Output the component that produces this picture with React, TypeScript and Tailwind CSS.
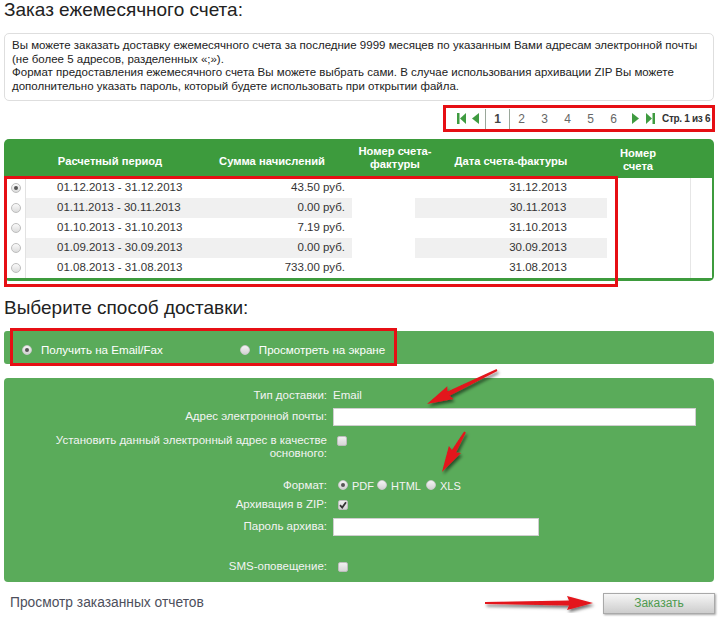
import React from "react";

const rows = [
  { period: "01.12.2013 - 31.12.2013", sum: "43.50 руб.", date: "31.12.2013" },
  { period: "01.11.2013 - 30.11.2013", sum: "0.00 руб.", date: "30.11.2013" },
  { period: "01.10.2013 - 31.10.2013", sum: "7.19 руб.", date: "31.10.2013" },
  { period: "01.09.2013 - 30.09.2013", sum: "0.00 руб.", date: "30.09.2013" },
  { period: "01.08.2013 - 31.08.2013", sum: "733.00 руб.", date: "31.08.2013" },
];

function Radio({ checked, light }: { checked?: boolean; light?: boolean }) {
  return (
    <span
      className={`flex h-[10px] w-[10px] shrink-0 items-center justify-center rounded-full border ${
        light
          ? "border-[#c9c9c9] bg-gradient-to-b from-[#f4f4f4] to-[#d2d2d2]"
          : "border-[#bdbdbd] bg-gradient-to-b from-[#fafafa] to-[#dcdcdc]"
      }`}
    >
      {checked && <span className="h-[4px] w-[4px] rounded-full bg-[#555]" />}
    </span>
  );
}

function Checkbox({ checked }: { checked?: boolean }) {
  return (
    <span className="flex h-[10px] w-[10px] shrink-0 items-center justify-center rounded-[2px] border border-[#bdbdbd] bg-gradient-to-b from-[#f0f0f0] to-[#d6d6d6]">
      {checked && (
        <svg width="8" height="8" viewBox="0 0 8 8">
          <path d="M1 4.2 L3.2 6.5 L7 1.2" fill="none" stroke="#333" strokeWidth="1.8" />
        </svg>
      )}
    </span>
  );
}

function Arrow({ x1, y1, x2, y2 }: { x1: number; y1: number; x2: number; y2: number }) {
  const dx = x2 - x1;
  const dy = y2 - y1;
  const len = Math.hypot(dx, dy);
  const ux = dx / len;
  const uy = dy / len;
  const nx = -uy;
  const ny = ux;
  const head = 24;
  const hw = 7;
  const bx = x2 - ux * head;
  const by = y2 - uy * head;
  const p = (x: number, y: number) => `${x.toFixed(1)},${y.toFixed(1)}`;
  const pts = [
    p(x1 + nx * 1, y1 + ny * 1),
    p(bx + nx * 2.4, by + ny * 2.4),
    p(bx - ux * 2 + nx * hw, by - uy * 2 + ny * hw),
    p(x2, y2),
    p(bx - ux * 2 - nx * hw, by - uy * 2 - ny * hw),
    p(bx - nx * 2.4, by - ny * 2.4),
    p(x1 - nx * 1, y1 - ny * 1),
  ].join(" ");
  return <polygon points={pts} fill="#e3141b" filter="url(#arrowShadow)" />;
}

function FirstIcon() {
  return (
    <svg width="9" height="11" viewBox="0 0 9 11">
      <rect x="0" y="0" width="2.5" height="11" fill="#3f9b40" />
      <path d="M9 0 L3 5.5 L9 11 Z" fill="#3f9b40" />
    </svg>
  );
}

function PrevIcon() {
  return (
    <svg width="7" height="11" viewBox="0 0 7 11">
      <path d="M7 0 L0 5.5 L7 11 Z" fill="#3f9b40" />
    </svg>
  );
}

function NextIcon() {
  return (
    <svg width="7" height="11" viewBox="0 0 7 11">
      <path d="M0 0 L7 5.5 L0 11 Z" fill="#3f9b40" />
    </svg>
  );
}

function LastIcon() {
  return (
    <svg width="9" height="11" viewBox="0 0 9 11">
      <path d="M0 0 L6 5.5 L0 11 Z" fill="#3f9b40" />
      <rect x="6.5" y="0" width="2.5" height="11" fill="#3f9b40" />
    </svg>
  );
}

export default function App() {
  return (
    <div className="relative h-[624px] w-[720px] overflow-hidden bg-white px-[4px] font-['Liberation_Sans',Arial,sans-serif] text-[#222]">
      <h1 className="h-[20px] text-[19px] leading-[20px] font-normal">Заказ ежемесячного счета:</h1>

      <div className="mt-[13px] h-[68px] w-[710px] rounded-[5px] border border-[#dedede] pt-[5px] pl-[7px] text-[11.5px] leading-[13.5px] whitespace-nowrap text-[#222]">
        Вы можете заказать доставку ежемесячного счета за последние 9999 месяцев по указанным Вами адресам электронной почты
        <br />
        (не более 5 адресов, разделенных «;»).
        <br />
        Формат предоставления ежемесячного счета Вы можете выбрать сами. В случае использования архивации ZIP Вы можете
        <br />
        дополнительно указать пароль, который будете использовать при открытии файла.
      </div>

      <div className="mt-[4px] ml-[439px] flex h-[27px] w-[272px] items-center border-[3px] border-[#e60f14] bg-white text-[12px] text-[#666]">
        <span className="ml-[11px] flex">
          <FirstIcon />
        </span>
        <span className="ml-[6px] flex">
          <PrevIcon />
        </span>
        <span className="ml-[6px] h-[20px] w-px bg-[#9aa79a]" />
        <span className="w-[23px] text-center font-bold text-[#444]">1</span>
        <span className="h-[20px] w-px bg-[#9aa79a]" />
        {["2", "3", "4", "5", "6"].map((n) => (
          <span key={n} className="w-[23px] text-center">
            {n}
          </span>
        ))}
        <span className="ml-[7px] flex">
          <NextIcon />
        </span>
        <span className="ml-[7px] flex">
          <LastIcon />
        </span>
        <span className="ml-[7px] text-[10px] font-bold tracking-[-0.3px] text-[#333]">Стр. 1 из 6</span>
      </div>

      <div className="relative mt-[7px] w-[710px] rounded-[5px] bg-[#3d9b3d] px-[2px] pb-[3px]">
        <div className="flex h-[39px] text-[11.2px] font-bold leading-[13px] text-white">
          <div className="w-[20px]" />
          <div className="flex w-[168px] items-center justify-center pt-[5px]">Расчетный период</div>
          <div className="flex w-[156px] items-center justify-center pt-[5px]">Сумма начислений</div>
          <div className="flex w-[90px] items-center justify-center pb-[2px] text-center">
            Номер счета-
            <br />
            фактуры
          </div>
          <div className="flex w-[142px] items-center justify-center pt-[5px]">Дата счета-фактуры</div>
          <div className="flex w-[112px] items-center justify-center pt-[2px] text-center">
            Номер
            <br />
            счета
          </div>
          <div className="w-[18px]" />
        </div>
        <div className="bg-white text-[11.5px] text-[#333]">
          {rows.map((r, i) => {
            const gray = i % 2 === 1 ? "bg-[#f0f0f0]" : "bg-white";
            return (
              <div key={r.period} className="flex h-[20px] items-center">
                <div className="flex h-full w-[20px] items-center justify-center border-r border-[#e2e2e2]">
                  <Radio checked={i === 0} />
                </div>
                <div className={`flex h-full w-[174px] items-center pl-[31px] ${gray}`}>{r.period}</div>
                <div className={`flex h-full w-[152px] items-center justify-end pr-[7px] ${gray}`}>{r.sum}</div>
                <div className="h-full w-[63px]" />
                <div className={`flex h-full w-[192px] items-center justify-center pl-[54px] ${gray}`}>{r.date}</div>
                <div className="h-full w-[83px]" />
                <div className="h-full w-[22px] border-l border-[#e6e6e6]" />
              </div>
            );
          })}
        </div>
        <div className="pointer-events-none absolute top-[37px] left-0 h-[111px] w-[614px] border-[3px] border-[#e60f14]" />
      </div>

      <h2 className="mt-[17px] h-[20px] text-[19px] leading-[20px] font-normal">Выберите способ доставки:</h2>

      <div className="relative mt-[13px] flex h-[33px] w-[710px] items-center rounded-[3px] bg-[#5aab5a] pt-[5px] text-[11.6px] text-white">
        <span className="ml-[18px] flex items-center gap-[9px]">
          <Radio checked light />
          Получить на Email/Fax
        </span>
        <span className="ml-[77px] flex items-center gap-[9px]">
          <Radio light />
          Просмотреть на экране
        </span>
        <div className="pointer-events-none absolute top-[-3px] left-[6px] h-[38px] w-[387px] border-[3px] border-[#e60f14]" />
      </div>

      <div className="mt-[14px] flex w-[710px] flex-col rounded-[4px] bg-[#5aab5a] pt-[11px] pb-[7px] text-[11.5px] text-[#f4f4f4]">
        <div className="flex h-[14px] items-center">
          <span className="w-[323px] text-right">Тип доставки:</span>
          <span className="ml-[6px]">Email</span>
        </div>
        <div className="flex h-[27px] items-center">
          <span className="w-[323px] text-right">Адрес электронной почты:</span>
          <span className="ml-[6px] h-[18px] w-[363px] border border-[#cfcfcf] bg-white" />
        </div>
        <div className="mt-[4px] flex h-[27px] items-start">
          <span className="w-[323px] text-right leading-[13px]">
            Установить данный электронный адрес в качестве
            <br />
            основного:
          </span>
          <span className="mt-[2px] ml-[10px]">
            <Checkbox />
          </span>
        </div>
        <div className="mt-[17px] flex h-[16px] items-center">
          <span className="w-[323px] text-right">Формат:</span>
          <span className="ml-[11px] flex items-center text-[11px]">
            <span className="-mt-[3px]">
              <Radio checked light />
            </span>
            <span className="ml-[4px]">PDF</span>
            <span className="-mt-[3px] ml-[3px]">
              <Radio light />
            </span>
            <span className="ml-[4px]">HTML</span>
            <span className="-mt-[3px] ml-[5px]">
              <Radio light />
            </span>
            <span className="ml-[4px]">XLS</span>
          </span>
        </div>
        <div className="mt-[3px] flex h-[16px] items-center">
          <span className="w-[323px] text-right">Архивация в ZIP:</span>
          <span className="ml-[11px]">
            <Checkbox checked />
          </span>
        </div>
        <div className="mt-[2px] flex h-[23px] items-center">
          <span className="w-[323px] text-right">Пароль архива:</span>
          <span className="ml-[6px] h-[18px] w-[206px] border border-[#cfcfcf] bg-white" />
        </div>
        <div className="mt-[21px] flex h-[16px] items-center">
          <span className="w-[323px] text-right">SMS-оповещение:</span>
          <span className="ml-[11px]">
            <Checkbox />
          </span>
        </div>
      </div>

      <div className="mt-[10px] flex h-[22px] w-[711px] items-center justify-between">
        <span className="ml-[6px] text-[13.8px] text-[#4d4f5c]">Просмотр заказанных отчетов</span>
        <button className="h-[21px] w-[112px] border border-[#a9a9a9] bg-gradient-to-b from-[#f6f6f6] to-[#cdcdcd] text-[12px] text-[#4e9a4e] shadow-[1px_1px_2px_rgba(0,0,0,0.35)]">
          Заказать
        </button>
      </div>

      <svg className="pointer-events-none absolute top-0 left-0" width="720" height="624">
        <defs>
          <filter id="arrowShadow" x="-20%" y="-20%" width="140%" height="140%">
            <feDropShadow dx="1.5" dy="2.5" stdDeviation="1.5" floodColor="#000" floodOpacity="0.55" />
          </filter>
        </defs>
        <Arrow x1={497} y1={370} x2={427} y2={404} />
        <Arrow x1={465} y1={432} x2={442} y2={472} />
        <Arrow x1={485} y1={603} x2={593} y2={603} />
      </svg>
    </div>
  );
}
